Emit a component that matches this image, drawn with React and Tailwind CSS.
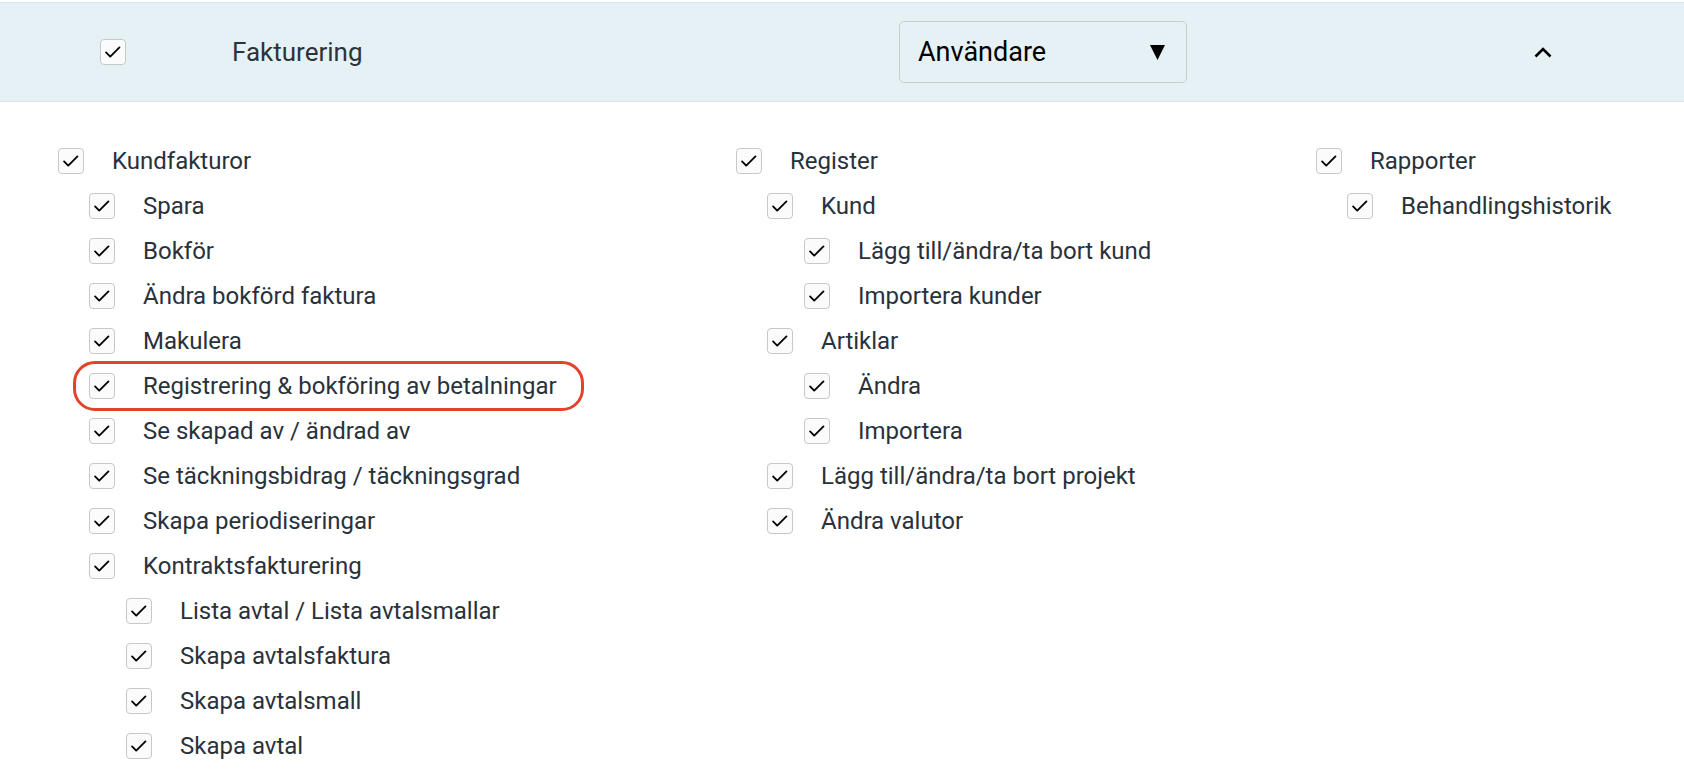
const col1 = [
  { label: 'Kundfakturor', level: 0 },
  { label: 'Spara', level: 1 },
  { label: 'Bokför', level: 1 },
  { label: 'Ändra bokförd faktura', level: 1 },
  { label: 'Makulera', level: 1 },
  { label: 'Registrering & bokföring av betalningar', level: 1, marked: true },
  { label: 'Se skapad av / ändrad av', level: 1 },
  { label: 'Se täckningsbidrag / täckningsgrad', level: 1 },
  { label: 'Skapa periodiseringar', level: 1 },
  { label: 'Kontraktsfakturering', level: 1 },
  { label: 'Lista avtal / Lista avtalsmallar', level: 2 },
  { label: 'Skapa avtalsfaktura', level: 2 },
  { label: 'Skapa avtalsmall', level: 2 },
  { label: 'Skapa avtal', level: 2 },
];

const col2 = [
  { label: 'Register', level: 0 },
  { label: 'Kund', level: 1 },
  { label: 'Lägg till/ändra/ta bort kund', level: 2 },
  { label: 'Importera kunder', level: 2 },
  { label: 'Artiklar', level: 1 },
  { label: 'Ändra', level: 2 },
  { label: 'Importera', level: 2 },
  { label: 'Lägg till/ändra/ta bort projekt', level: 1 },
  { label: 'Ändra valutor', level: 1 },
];

const col3 = [
  { label: 'Rapporter', level: 0 },
  { label: 'Behandlingshistorik', level: 1 },
];

const indent = ['pl-0', 'pl-[31px]', 'pl-[68px]'];

function Check() {
  return (
    <span className="w-[26px] h-[26px] shrink-0 rounded-[4px] border border-[#c6c8ca] bg-[#fbfbfb] flex items-center justify-center">
      <svg width="26" height="26" viewBox="0 0 26 26" fill="none">
        <path d="M5.5 13.5 L10 18 L20 8" stroke="#000" strokeWidth="2" strokeLinecap="round" strokeLinejoin="round" />
      </svg>
    </span>
  );
}

function Row({ item }) {
  return (
    <div className={`h-[45px] flex items-center ${indent[item.level]}`}>
      <div className="relative flex items-center gap-[28px]">
        {item.marked && (
          <div className="absolute -left-[16px] -top-[11px] -bottom-[11px] w-[511px] border-[3px] border-[#e4432b] rounded-[22px]" />
        )}
        <Check />
        <span className="text-[24px] leading-[28px] text-[#29313b] whitespace-nowrap">{item.label}</span>
      </div>
    </div>
  );
}

export default function App() {
  return (
    <div className="min-h-[784px] bg-white pt-[2px]" style={{ fontFamily: 'Roboto, "Noto Sans", sans-serif' }}>
      {/* Module header */}
      <div className="h-[100px] bg-[#e6f1f6] border-t border-b border-[#dde3e6] flex items-center">
        <div className="pl-[100px] w-[232px] shrink-0">
          <Check />
        </div>
        <div className="w-[667px] shrink-0 text-[26px] text-[#2e3339]">Fakturering</div>
        <div className="w-[288px] h-[62px] shrink-0 rounded-[5px] border border-[#c9cdd0] flex items-center justify-between pl-[18px] pr-[21px]">
          <span className="text-[27px] text-black">Användare</span>
          <svg width="15" height="15" viewBox="0 0 15 15">
            <path d="M0 0 H15 L7.5 15 Z" fill="#000" />
          </svg>
        </div>
        <div className="ml-[347px]">
          <svg width="18" height="11" viewBox="0 0 18 11" fill="none">
            <path d="M1.5 9.5 L9 2 L16.5 9.5" stroke="#000" strokeWidth="2.6" />
          </svg>
        </div>
      </div>

      {/* Permissions */}
      <div className="flex pl-[58px] pt-[36px]">
        <div className="w-[678px] shrink-0">
          {col1.map((it) => <Row key={it.label} item={it} />)}
        </div>
        <div className="w-[580px] shrink-0">
          {col2.map((it) => <Row key={it.label} item={it} />)}
        </div>
        <div className="flex-1">
          {col3.map((it) => <Row key={it.label} item={it} />)}
        </div>
      </div>
    </div>
  );
}
